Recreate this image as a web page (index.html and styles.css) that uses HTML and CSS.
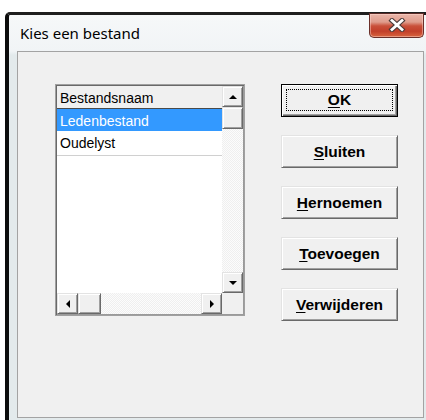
FILE: index.html
```html
<!DOCTYPE html>
<html lang="nl">
<head>
<meta charset="utf-8">
<title>Kies een bestand</title>
<link rel="stylesheet" href="styles.css">
</head>
<body>
<div class="window">
  <div class="titlebar">
    <span class="title">Kies een bestand</span>
    <button class="close" aria-label="Sluiten">
      <svg width="18" height="14" viewBox="0 0 18 14">
        <path d="M4 2.5 L14 11.5 M14 2.5 L4 11.5" stroke="#4a3a38" stroke-width="5" stroke-linecap="square" fill="none"/>
        <path d="M4 2.5 L14 11.5 M14 2.5 L4 11.5" stroke="#ffffff" stroke-width="2.8" stroke-linecap="square" fill="none"/>
      </svg>
    </button>
  </div>
  <div class="client">
    <div class="listbox">
      <div class="rows">
        <div class="row head">Bestandsnaam</div>
        <div class="row selected">Ledenbestand</div>
        <div class="row line">Oudelyst</div>
      </div>
      <div class="vscroll">
        <div class="sbtn"><span class="arrow up"></span></div>
        <div class="sbtn thumb"></div>
        <div class="track"></div>
        <div class="sbtn"><span class="arrow down"></span></div>
      </div>
      <div class="hscroll">
        <div class="sbtn"><span class="arrow left"></span></div>
        <div class="sbtn thumb"></div>
        <div class="track"></div>
        <div class="sbtn"><span class="arrow right"></span></div>
      </div>
      <div class="corner"></div>
    </div>
    <div class="buttons">
      <button class="btn default"><span class="focus"><u>O</u>K</span></button>
      <button class="btn"><span><u>S</u>luiten</span></button>
      <button class="btn"><span><u>H</u>ernoemen</span></button>
      <button class="btn"><span><u>T</u>oevoegen</span></button>
      <button class="btn"><span><u>V</u>erwijderen</span></button>
    </div>
  </div>
</div>
</body>
</html>
```

FILE: styles.css
```css
html, body {
  margin: 0;
  padding: 0;
}

body {
  width: 426px;
  height: 420px;
  overflow: hidden;
  background: #ffffff;
}

/* window frame */
.window {
  margin: 12px 0 0 5px;
  width: 407px;
  height: 420px;
  padding: 0 3px 0 8px;
  border-left: 4px solid #0c0c0c;
  border-top: 3px solid #1e1e1e;
  border-top-left-radius: 5px;
  background: linear-gradient(#f6f8f9 0, #f1f4f6 36px, #e3eaec 40px, #e3eaec 100%);
}

.titlebar {
  height: 36px;
  display: flex;
  justify-content: space-between;
  align-items: flex-start;
}

.title {
  padding-left: 3px;
  font: 15px/36px "Noto Sans", "Liberation Sans", sans-serif;
  color: #000;
}

.close {
  margin-top: -2px;
  width: 55px;
  height: 25px;
  padding: 0 0 2px 0;
  border: 1px solid #6a2f29;
  border-top-color: #5a2a26;
  border-radius: 0 0 5px 5px;
  background: linear-gradient(#eab6aa 0, #df9c8c 35%, #c9503a 52%, #c23f2a 75%, #d8653f 100%);
  box-shadow: inset 0 0 0 1px rgba(255, 220, 210, 0.45);
  display: flex;
  align-items: center;
  justify-content: center;
}

.close svg {
  display: block;
}

/* dialog body */
.client {
  height: 367px;
  border: 1px solid #a3a3a3;
  background: #f0f0f0;
  padding: 32px 0 0 37px;
  box-sizing: border-box;
  display: flex;
  align-items: flex-start;
}

/* list box with scroll bars */
.listbox {
  width: 190px;
  height: 232px;
  box-sizing: border-box;
  border: 1px solid #a0a0a0;
  padding: 1px;
  box-shadow: inset 1px 1px #696969, inset -1px -1px #9a9a9a;
  display: grid;
  grid-template-columns: 165px 21px;
  grid-template-rows: 207px 21px;
  background: #fff;
}

.rows {
  background: #fff;
  font: 14px "Liberation Sans", Arial, sans-serif;
  color: #000;
}

.row {
  height: 22px;
  line-height: 24px;
  padding-left: 3px;
  white-space: nowrap;
}

.row.head {
  background: #f0f0f0;
  border-bottom: 1px solid #4a4a4a;
}

.row.selected {
  background: #3399ff;
  color: #fff;
}

.row.line {
  height: 24px;
  border-bottom: 1px solid #d0d0d0;
}

.vscroll {
  display: flex;
  flex-direction: column;
}

.hscroll {
  display: flex;
}

.sbtn {
  width: 21px;
  height: 21px;
  flex: none;
  box-sizing: border-box;
  background: #f0f0f0;
  border: 1px solid;
  border-color: #e3e3e3 #696969 #696969 #e3e3e3;
  box-shadow: inset 1px 1px #fff, inset -1px -1px #a0a0a0;
  display: flex;
  align-items: center;
  justify-content: center;
}

.vscroll .thumb {
  height: 22px;
}

.hscroll .thumb {
  width: 23px;
}

.track {
  flex: 1;
  background-color: #fcfcfc;
  background-image: repeating-conic-gradient(#efefef 0 25%, #fcfcfc 0 50%);
  background-size: 2px 2px;
}

.corner {
  background: #f0f0f0;
}

.arrow {
  width: 0;
  height: 0;
  border: 4.5px solid transparent;
}

.arrow.up {
  border-bottom-color: #000;
  border-top-width: 0;
}

.arrow.down {
  border-top-color: #000;
  border-bottom-width: 0;
}

.arrow.left {
  border-right-color: #000;
  border-left-width: 0;
}

.arrow.right {
  border-left-color: #000;
  border-right-width: 0;
}

/* command buttons */
.buttons {
  margin-left: 36px;
  display: flex;
  flex-direction: column;
  gap: 18px;
}

.btn {
  width: 117px;
  height: 33px;
  padding: 0;
  box-sizing: border-box;
  background: #f0f0f0;
  border: 1px solid;
  border-color: #e3e3e3 #696969 #696969 #e3e3e3;
  box-shadow: inset 1px 1px #fff, inset -1px -1px #a0a0a0;
  font: bold 15.5px "Liberation Sans", Arial, sans-serif;
  color: #000;
  display: flex;
  align-items: center;
  justify-content: center;
}

.btn u {
  text-underline-offset: 2px;
}

.btn.default {
  border: 1px solid #000;
  box-shadow: inset 1px 1px #fff, inset -1px -1px #696969, inset -2px -2px #a0a0a0;
}

.btn .focus {
  align-self: stretch;
  flex: 1;
  margin: 4px 4px 5px 4px;
  border: 1px dotted #000;
  display: flex;
  align-items: center;
  justify-content: center;
}
```
